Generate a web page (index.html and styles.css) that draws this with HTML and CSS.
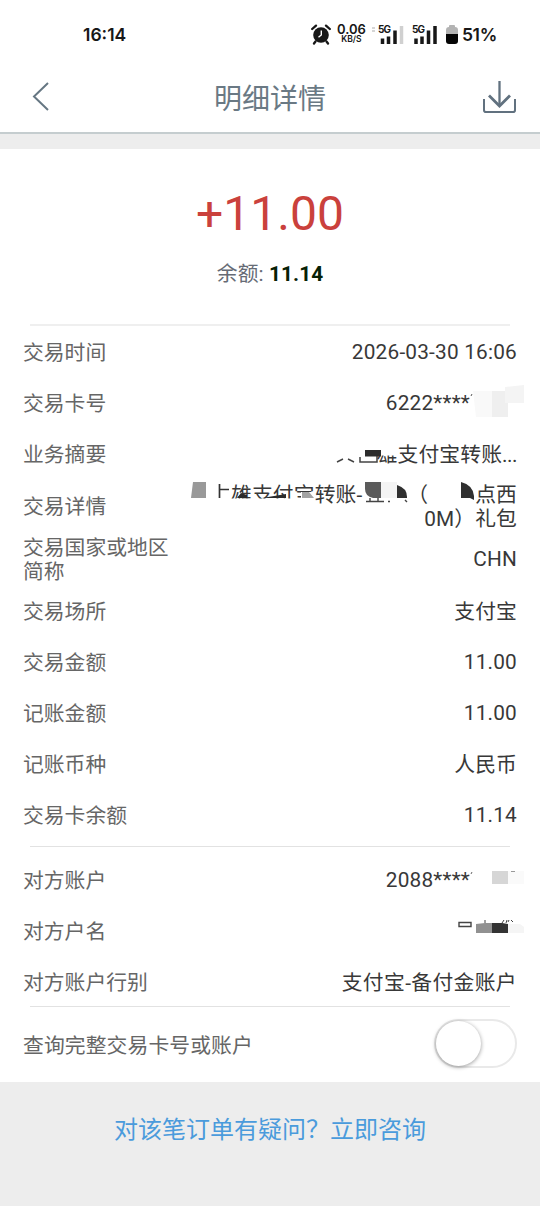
FILE: index.html
```html
<!DOCTYPE html>
<html lang="zh-CN">
<head>
<meta charset="utf-8">
<title>明细详情</title>
<link rel="stylesheet" href="styles.css">
</head>
<body>
<div class="status">
  <span class="clock">16:14</span>
  <div class="status-icons">
    <svg class="alarm" width="20" height="21" viewBox="0 0 20 21"><circle cx="10" cy="11" r="7.8" fill="#171717"/><path d="M1.2 5 L5 1.6 M18.8 5 L15 1.6 M4.5 17.5 L3 19.5 M15.5 17.5 L17 19.5" stroke="#171717" stroke-width="2.3" stroke-linecap="round"/><path d="M10.3 6.5 V11 L7.5 13.2" fill="none" stroke="#fff" stroke-width="1.4"/></svg>
    <div class="speed"><b>0.06</b><small>KB/S</small></div>
    <svg class="signal" width="33" height="22" viewBox="0 0 33 22"><path d="M0 4h3M0 7h3" stroke="#d5d5d5" stroke-width="2"/><text x="6" y="9" class="net">5G</text><path d="M10.5 20V14.5M16.5 20V12.5M23 20V6.5" stroke="#171717" stroke-width="3.5"/><path d="M29.5 20V2" stroke="#d0d0d0" stroke-width="3.5"/></svg>
    <svg class="signal" width="27" height="22" viewBox="0 0 27 22"><text x="0" y="9" class="net">5G</text><path d="M4 20V14.5M10 20V12.5M16.5 20V6.5M23 20V2" stroke="#171717" stroke-width="3.5"/></svg>
    <svg class="battery" width="12" height="20" viewBox="0 0 12 20"><path d="M3 2V1a1 1 0 0 1 1-1h4a1 1 0 0 1 1 1v1a3 3 0 0 1 3 3v5H0V5a3 3 0 0 1 3-3z" fill="#b3b3b3"/><path d="M0 9h12v7a3 3 0 0 1-3 3H3a3 3 0 0 1-3-3z" fill="#050505"/></svg>
    <span class="percent">51%</span>
  </div>
</div>
<header class="header">
  <svg class="back" width="18" height="30" viewBox="0 0 18 30"><path d="M16 2 L2 15.5 L16 29" fill="none" stroke="#667783" stroke-width="2"/></svg>
  <h1>明细详情</h1>
  <svg class="download" width="34" height="34" viewBox="0 0 34 34"><path d="M17.5 1V26" fill="none" stroke="#61717f" stroke-width="2.3"/><path d="M7 15.5L17.5 26L28 15.5" fill="none" stroke="#61717f" stroke-width="2.8"/><path d="M2 19V30.2Q2 32 4 32H31Q33 32 33 30.2V19" fill="none" stroke="#61717f" stroke-width="2"/></svg>
</header>
<main class="card">
  <section class="summary">
    <div class="amount">+11.00</div>
    <div class="balance">余额: <b>11.14</b></div>
  </section>
  <section class="group main-group">
    <div class="row"><span>交易时间</span><span class="value number">2026-03-30 16:06</span></div>
    <div class="row"><span>交易卡号</span><span class="value number masked">6222****</span>
      <svg class="redact" width="220" height="51" viewBox="320 377 220 51"><path d="M471 396l1-2" stroke="#555"/><path fill="#f9f9f9" d="M473 391h19v26h-16z"/><path fill="#efefef" d="M492 391h16v26h-16z"/><path fill="#f4f4f4" d="M505 387l19-2v18h-19z"/></svg></div>
    <div class="row"><span>业务摘要</span><span class="value"><span class="half">雄</span>支付宝转账<span class="dots">...</span></span>
      <svg class="redact" width="220" height="51" viewBox="320 428 220 51"><path d="M337 462l6-3M348 459l6 3M360 457v5h17v-6" fill="none" stroke="#444" stroke-width="1.5"/><path fill="#2c2c2c" d="M365 450h16v6.5h-16z"/></svg></div>
    <div class="row detail"><span>交易详情</span>
      <span class="value"><span class="line"><span class="top-part">雄支付宝</span>转账-<span class="hidden-a"></span>（<span class="hidden-b"></span>点西</span><span class="line">0M）礼包</span></span>
      <svg class="redact" width="360" height="53" viewBox="180 479 360 53">
        <path fill="#999" d="M193 482h13v16h-15z"/><path d="M219.5 484v14M220 489.5h9" stroke="#333" stroke-width="1.7"/>
        <path fill="#2b2b2b" d="M237 498l4-5 6 2v3zM262 498l24-4v4z"/><path fill="#fff" d="M301 492h13v7h-13z"/><path fill="#a3a3a3" d="M302 492h7l5 6h-12z"/>
        <path fill="#5b5b5b" d="M365 482h16v16h-8q-8-2-8-9z"/><path fill="#f4f4f4" d="M381 482h16v16h-16z"/><path fill="#303030" d="M397 485q10 3 10 12v1h-10z"/>
        <path d="M366 501.5h18M370 498v3M378 498v3M388 501.5h2M405 500l2 2" stroke="#444" stroke-width="1.4"/><path fill="#303030" d="M461 482q12 3 13 14v4l-4-2h-9z"/>
      </svg></div>
    <div class="row country"><span>交易国家或地区<br>简称</span><span class="value number">CHN</span></div>
    <div class="row"><span>交易场所</span><span class="value">支付宝</span></div>
    <div class="row"><span>交易金额</span><span class="value number">11.00</span></div>
    <div class="row"><span>记账金额</span><span class="value number">11.00</span></div>
    <div class="row"><span>记账币种</span><span class="value">人民币</span></div>
    <div class="row"><span>交易卡余额</span><span class="value number">11.14</span></div>
  </section>
  <section class="group party">
    <div class="row"><span>对方账户</span><span class="value number masked">2088****</span>
      <svg class="redact" width="180" height="51" viewBox="360 854 180 51"><path d="M471 874l1-2" stroke="#666"/><path fill="#d6d6d6" d="M492 871h16v13h-16z"/><path fill="#fafafa" d="M508 871h16v13h-16z"/><path d="M511 871.5h4" stroke="#999"/></svg></div>
    <div class="row"><span>对方户名</span>
      <svg class="redact" width="180" height="51" viewBox="360 905 180 51"><path d="M459 922.5h12v4h-12z" fill="none" stroke="#444" stroke-width="1.4"/><path fill="#919191" d="M476 924l9-1h7v10h-16z"/><path fill="#333" d="M492 923h10l6 1v9h-16z"/><path fill="#f5f5f5" d="M508 924h12l4 3v6h-16z"/><path d="M485 920v3M502 923l2-3M506 923l1-3M509 920l-1 2M511 920l2 2" stroke="#444"/></svg></div>
    <div class="row last"><span>对方账户行别</span><span class="value account">支付宝-备付金账户</span></div>
  </section>
  <section class="group query">
    <div class="row switch-row"><span>查询完整交易卡号或账户</span><span class="switch"><i class="knob"></i></span></div>
  </section>
</main>
<footer class="consult">对该笔订单有疑问？立即咨询</footer>
</body>
</html>
```
FILE: styles.css
```css
* { box-sizing: border-box; }
body { margin: 0; width: 540px; height: 1206px; overflow: hidden; background: #ededed; color: #333; font-family: Roboto, "Noto Sans CJK SC", sans-serif; font-size: 20.8px; line-height: 24px; }
svg { display: block; flex: none; }
.status { height: 60px; padding: 9px 43px 0 83px; background: #fff; display: flex; align-items: center; justify-content: space-between; color: #171717; font-family: Inter, sans-serif; }
.clock { font-size: 17.5px; font-weight: 600; }
.status-icons { display: flex; align-items: center; }
.speed { display: flex; flex-direction: column; align-items: center; width: 31px; margin: -1px 5px 0; }
.speed b { font-size: 13px; line-height: 11px; height: 11px; font-weight: 600; }
.speed small { font-size: 8.5px; line-height: 9px; font-weight: 600; }
.net { font: 700 10px Inter, sans-serif; letter-spacing: -.8px; fill: #171717; }
.signal { margin-right: 7px; }
.percent { font-size: 17.5px; font-weight: 600; margin-left: 4px; letter-spacing: -.3px; }
.header { height: 74px; padding: 0 23px 0 32px; background: #fff; border-bottom: 2px solid #c5cdcf; display: grid; grid-template-columns: 80px 1fr 80px; align-items: center; }
.header h1 { margin: 7px 0 0 -9px; text-align: center; color: #6a7984; font-size: 28px; line-height: 34px; font-weight: 400; }
.download { justify-self: end; margin: 2px 1px 0 0; }
.card { margin-top: 15px; height: 933px; background: #fff; }
.summary { height: 175px; padding-top: 37px; text-align: center; }
.amount { height: 56px; line-height: 56px; font-size: 48px; color: #ca413c; }
.balance { margin-top: 20px; color: #666b75; font-weight: 400; letter-spacing: .1px; }
.balance b { color: #062106; font-weight: 700; }
.group { position: relative; }
.group::before { content: ""; display: block; height: 2px; margin: 0 30px; background: #efefef; }
.row { position: relative; height: 51px; padding: 0 23px; display: flex; align-items: center; justify-content: space-between; color: #666; font-weight: 400; }
.row > span { padding-top: 2px; }
.value { color: #383838; font-weight: 400; text-align: right; letter-spacing: .1px; }
.row > .number { padding-top: 1px; letter-spacing: .2px; }
.dots { letter-spacing: -.5px; }
.account { letter-spacing: .35px; }
.masked { margin-right: 47px; }
.redact { position: absolute; top: 0; right: 0; }
.half { clip-path: inset(13px 0 0 0); }
.half, .top-part { display: inline-block; }
.top-part { clip-path: inset(0 0 8px 0); }
.detail { height: 53px; }
.line { display: block; white-space: nowrap; }
.hidden-a { display: inline-block; width: 45px; }
.hidden-b { display: inline-block; width: 47px; }
.country { height: 53px; }
.party { margin-top: 6px; }
.party::before, .query::before { height: 1px; background: #e2e2e2; }
.party::before { margin-bottom: 7px; }
.party .last { height: 51px; }
.query { margin-top: -1px; }
.switch-row { height: 76px; letter-spacing: .1px; }
.row > .switch { width: 83px; height: 49px; padding: 0; border: 2px solid #e9e9e9; border-radius: 25px; margin-top: -4px; }
.knob { display: block; width: 45px; height: 45px; border-radius: 50%; background: #fff; box-shadow: 0 1px 4px rgba(0,0,0,.4); }
.consult { height: 94px; color: #4a9bdc; font-size: 24px; line-height: 30px; text-align: center; padding-top: 33px; font-weight: 400; }
```
